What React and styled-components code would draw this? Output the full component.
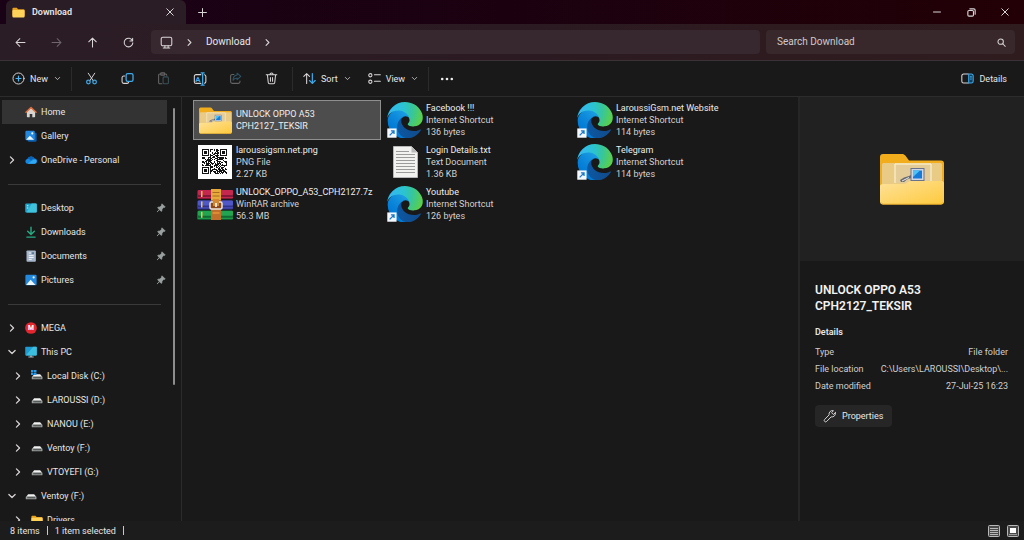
import React, { useState } from "react";
import styled, { createGlobalStyle } from "styled-components";

const GlobalStyle = createGlobalStyle`
    * {
        box-sizing: border-box;
    }
    body {
        margin: 0;
        background: #191919;
        color: #e6e6e6;
        font-family: Roboto, "Open Sans", sans-serif;
        font-size: 9px;
        line-height: 12px;
    }
    button, input {
        margin: 0;
        padding: 0;
        border: none;
        background: none;
        color: inherit;
        font: inherit;
    }
    button {
        cursor: pointer;
    }
    a {
        color: inherit;
        text-decoration: none;
    }
    svg {
        display: block;
        flex: none;
    }
`;

const Window = styled.div`
    height: 100vh;
    display: flex;
    flex-direction: column;
    overflow: hidden;
`;

const TitleBar = styled.header`
    height: 24px;
    flex: none;
    display: flex;
    align-items: center;
    padding-left: 6px;
    background: linear-gradient(90deg, #1a0216, #1b0110 50%, #220005);
`;

const Tab = styled.div`
    width: 180px;
    height: 24px;
    display: flex;
    align-items: center;
    padding: 0 10px 0 6px;
    gap: 7px;
    border-radius: 6px 6px 0 0;
    background: #2b1d26;
    font-weight: 600;
    span {
        flex: 1;
    }
`;

const IconButton = styled.button`
    width: ${(props) => props.$width || 36}px;
    height: 24px;
    flex: none;
    display: flex;
    align-items: center;
    justify-content: center;
    opacity: ${(props) => (props.disabled ? 0.4 : 1)};
`;

const WindowButtons = styled.div`
    margin-left: auto;
    display: flex;
    padding-right: 2px;
`;

const NavBar = styled.div`
    height: 36px;
    flex: none;
    display: flex;
    align-items: center;
    padding: 0 9px 0 2px;
    background: linear-gradient(90deg, #2b1d26, #2b1a21 50%, #2f1c1f);
    font-size: 10px;
`;

const AddressBar = styled.nav`
    flex: 1;
    height: 24px;
    margin: 0 6px 0 5px;
    padding: 0 9px;
    display: flex;
    align-items: center;
    gap: 12px;
    border-radius: 4px;
    background: #37282f;
`;

const SearchBox = styled.label`
    width: 249px;
    height: 24px;
    display: flex;
    align-items: center;
    padding: 0 9px 0 11px;
    border-radius: 4px;
    background: #38282b;
    input {
        flex: 1;
        min-width: 0;
        outline: none;
    }
    input::placeholder {
        color: #d0c8ca;
        opacity: 1;
    }
`;

const Toolbar = styled.div`
    height: 37px;
    flex: none;
    display: flex;
    align-items: center;
    padding: 0 9px 0 4px;
    border-top: 1px solid #3a3236;
    border-bottom: 1px solid #2c2c2c;
    background: #191919;
`;

const ToolButton = styled.button`
    height: 24px;
    display: flex;
    align-items: center;
    gap: 5px;
    padding: 0 8px;
    svg + span + svg {
        margin-left: 1px;
    }
`;

const Divider = styled.div`
    width: 1px;
    height: 24px;
    margin: 0 2px;
    background: #2b2b2b;
`;

const Spacer = styled.div`
    flex: 1;
`;

const Body = styled.div`
    flex: 1;
    min-height: 0;
    display: flex;
`;

const Sidebar = styled.aside`
    width: 182px;
    flex: none;
    display: flex;
    justify-content: space-between;
    border-right: 1px solid #2b2b2b;
    overflow: hidden;
`;

const Tree = styled.ul`
    width: 167px;
    margin: 0;
    padding: 3px 0 0 2px;
    list-style: none;
`;

const TreeRow = styled.li`
    height: 24px;
    display: flex;
    align-items: center;
    padding: 0 1px 0 ${(props) => (props.$nested ? 10 : 4)}px;
    background: ${(props) => (props.$active ? "#333333" : "transparent")};
    a {
        flex: 1;
        display: flex;
        align-items: center;
        gap: 4px;
        white-space: nowrap;
    }
`;

const Expander = styled.button`
    width: 12px;
    height: 12px;
    margin-right: 7px;
    display: flex;
    align-items: center;
    justify-content: center;
`;

const TreeLine = styled.li`
    height: 1px;
    margin: 12px 6px 11px;
    background: #3a3a3a;
`;

const ScrollRail = styled.div`
    width: 8px;
    padding-top: 11px;
    div {
        width: 2px;
        height: 67%;
        border-radius: 1px;
        background: #8d8d8d;
    }
`;

const Files = styled.main`
    flex: 1;
    min-width: 0;
    padding: 3px 0 0 11px;
    display: grid;
    grid-template-columns: repeat(auto-fill, 188px);
    grid-auto-rows: 40px;
    align-content: start;
    gap: 2px;
`;

const FileItem = styled.button`
    display: flex;
    align-items: center;
    gap: 3px;
    padding-left: 3px;
    border: 1px solid ${(props) => (props.$selected ? "#8f8f8f" : "transparent")};
    background: ${(props) => (props.$selected ? "#4d4d4d" : "transparent")};
    text-align: left;
`;

const FileIcon = styled.span`
    width: 36px;
    flex: none;
    display: flex;
    justify-content: center;
`;

const FileText = styled.span`
    display: flex;
    flex-direction: column;
    white-space: nowrap;
    color: #d2d2d2;
    span:first-child {
        color: #ededed;
        white-space: pre-line;
    }
`;

const Details = styled.aside`
    width: 226px;
    flex: none;
    border-left: 2px solid #262626;
`;

const Preview = styled.div`
    height: 164px;
    display: flex;
    align-items: center;
    justify-content: center;
    background: #212121;
`;

const DetailsBody = styled.div`
    padding: 21px 16px 0 15px;
    h2 {
        margin: 0;
        font-size: 12px;
        line-height: 16px;
        font-weight: 600;
        color: #f2f2f2;
    }
    h3 {
        margin: 12px 0 6px;
        font-size: 9px;
        line-height: 12px;
        font-weight: 600;
    }
`;

const Properties = styled.dl`
    margin: 0 0 10px;
    color: #cfcfcf;
    div {
        display: flex;
        justify-content: space-between;
        line-height: 17px;
    }
    dd {
        margin: 0;
    }
`;

const PropertiesButton = styled.button`
    height: 22px;
    display: flex;
    align-items: center;
    gap: 5px;
    padding: 0 9px 0 8px;
    border-radius: 4px;
    background: #262626;
`;

const StatusBar = styled.footer`
    height: 19px;
    flex: none;
    display: flex;
    align-items: center;
    gap: 7px;
    padding: 0 5px 0 10px;
    background: #1c1c1c;
    i {
        width: 1px;
        height: 9px;
        background: #c8c8c8;
    }
`;

/* ---------- icons ---------- */

const Line = ({ size = 12, box = 16, children, color = "#d9d5d7", width = 1.3, ...rest }) => (
    <svg width={size} height={size} viewBox={`0 0 ${box} ${box}`} fill="none" stroke={color}
        strokeWidth={width} strokeLinecap="round" strokeLinejoin="round" aria-hidden="true" {...rest}>
        {children}
    </svg>
);

const Chevron = ({ down, size = 10, width = 2 }) => (
    <Line size={size} width={width}>
        <path d={down ? "M3 5.5 8 10.5 13 5.5" : "M5.5 3 10.5 8 5.5 13"} />
    </Line>
);

const SmallChevron = () => <Chevron down size={7} width={1.8} />;

const CloseIcon = () => <Line size={8}><path d="M1.5 1.5l13 13M14.5 1.5l-13 13" strokeWidth="2" /></Line>;
const PlusIcon = () => <Line size={9}><path d="M8 1v14M1 8h14" strokeWidth="1.8" /></Line>;
const MinimizeIcon = () => <Line size={8}><path d="M1 8h14" strokeWidth="2" /></Line>;
const RestoreIcon = () => (
    <Line size={9} width={2}>
        <rect x="1.5" y="4.5" width="10" height="10" rx="2" />
        <path d="M5 1.5h7a2.5 2.5 0 0 1 2.5 2.5v7" />
    </Line>
);
const BackIcon = () => <Line size={11}><path d="M14.5 8h-13M7 2.5 1.5 8 7 13.5" strokeWidth="1.5" /></Line>;
const ForwardIcon = () => <Line size={11}><path d="M1.5 8h13M9 2.5 14.5 8 9 13.5" strokeWidth="1.5" /></Line>;
const UpIcon = () => <Line size={11}><path d="M8 14.5v-13M2.5 7 8 1.5 13.5 7" strokeWidth="1.5" /></Line>;
const RefreshIcon = () => (
    <Line size={11}><path d="M13.8 5.5A6.3 6.3 0 1 0 14.3 8.5M14 1.8v4h-4" strokeWidth="1.5" /></Line>
);
const MonitorIcon = () => (
    <Line size={13}>
        <rect x="1.5" y="1.5" width="13" height="10.5" rx="2" />
        <path d="M6 12v2.5M10 12v2.5M4 14.7h8" />
    </Line>
);
const SearchIcon = () => (
    <Line size={9} width={1.8}><circle cx="6.5" cy="6.5" r="4.8" /><path d="M10.2 10.2 14.7 14.7" /></Line>
);

const NewIcon = () => (
    <Line size={13} width={1.2}>
        <circle cx="8" cy="8" r="6.8" />
        <path d="M8 5v6M5 8h6" stroke="#4cb4f0" strokeWidth="1.5" />
    </Line>
);
const CutIcon = () => (
    <Line size={13} width={1.2}>
        <path d="M4 1.5 10.3 11M12 1.5 5.7 11" />
        <circle cx="4.2" cy="12.3" r="2.2" stroke="#3fa9ea" strokeWidth="1.5" />
        <circle cx="11.8" cy="12.3" r="2.2" stroke="#3fa9ea" strokeWidth="1.5" />
    </Line>
);
const CopyIcon = () => (
    <Line size={13}>
        <path d="M4.5 5H3.3a2 2 0 0 0-2 2v5a2 2 0 0 0 2 2h4.2a2 2 0 0 0 2-1.5" />
        <rect x="6.3" y="2" width="8.5" height="9.5" rx="2" stroke="#3fa9ea" strokeWidth="1.6" />
    </Line>
);
const PasteIcon = () => (
    <Line size={13}>
        <path d="M6 14.5H3.5a1.5 1.5 0 0 1-1.5-1.5V4a1.5 1.5 0 0 1 1.5-1.5h7A1.5 1.5 0 0 1 12 4" />
        <rect x="4.5" y="1" width="5" height="3" rx="1" />
        <rect x="7.5" y="6" width="6.5" height="8.5" rx="1.3" stroke="#6fa5b8" />
    </Line>
);
const RenameIcon = () => (
    <Line size={14} width={1.2}>
        <path d="M9 3H3.5a2 2 0 0 0-2 2v6a2 2 0 0 0 2 2H9M13 3.2A2 2 0 0 1 14.7 5v6a2 2 0 0 1-1.7 1.9" />
        <path d="M9.3 1h3.4M11 1v14M9.3 15h3.4" stroke="#3fa9ea" strokeWidth="1.5" />
        <text x="2.7" y="11" fill="#3fa9ea" stroke="none" fontSize="9" fontWeight="700">A</text>
    </Line>
);
const ShareIcon = () => (
    <Line size={13}>
        <path d="M6 3H4a2 2 0 0 0-2 2v7a2 2 0 0 0 2 2h7.500a2 2 0 0 0 2-2v-1" />
        <path d="M10 1.5 14.5 5.5 10 9.5V7.3C7.5 7.3 6 8.3 5 10.3 5 6.5 7 4 10 3.7Z" stroke="#4fa9dc" />
    </Line>
);
const DeleteIcon = () => (
    <Line size={13}>
        <path d="M1.5 3.5h13M6 3.3a2 2 0 0 1 4 0M3 3.7l1 9.3a1.6 1.6 0 0 0 1.6 1.5h4.8A1.6 1.6 0 0 0 12 13l1-9.3M6.7 6.7v4.6M9.3 6.7v4.6" />
    </Line>
);
const SortIcon = () => (
    <Line size={13}>
        <path d="M4.5 14V2M1 5.5 4.5 2 8 5.5" />
        <path d="M11.5 2v12M8 10.5 11.5 14 15 10.5" stroke="#3fa9ea" strokeWidth="1.5" />
    </Line>
);
const ViewIcon = () => (
    <svg width="14" height="13" viewBox="0 0 17 16" fill="none" stroke="#d9d5d7" strokeWidth="1.3" strokeLinecap="round" aria-hidden="true">
        <circle cx="4" cy="4" r="2" />
        <circle cx="4" cy="12" r="2" />
        <path d="M9 3.5h7.300M9 11.5h7.300" />
    </svg>
);
const MoreIcon = () => (
    <svg width="14" height="4" viewBox="0 0 14 4" fill="#eee" aria-hidden="true">
        <circle cx="2.2" cy="2" r="1.3" /><circle cx="7" cy="2" r="1.3" /><circle cx="11.8" cy="2" r="1.3" />
    </svg>
);
const DetailsIcon = () => (
    <Line size={13}>
        <path d="M9 2.5H3.2A2.2 2.2 0 0 0 1 4.7v6.6a2.2 2.2 0 0 0 2.2 2.2H9" />
        <path d="M9.5 2.5h3.3A2.2 2.2 0 0 1 15 4.7v6.6a2.2 2.2 0 0 1-2.2 2.2H9.5z" stroke="#3fa9ea" fill="#123f5c" />
        <path d="M11.5 6h1.3M11.5 8.5h1.3" stroke="#3fa9ea" />
    </Line>
);
const WrenchIcon = () => (
    <Line size={14} width={1.1}>
        <path d="M14.2 4.2 11.8 6.3 9.8 4.3 11.9 1.9A4 4 0 0 0 7 6.7L1.9 11.9a1.6 1.6 0 0 0 2.3 2.3L9.3 9A4 4 0 0 0 14.2 4.2Z" />
    </Line>
);

const PinIcon = () => (
    <svg width="10" height="10" viewBox="0 0 16 16" aria-hidden="true">
        <path d="M9.6 1.2 14.8 6.4 13.4 7.2 11.9 7.3 9.7 9.8 9.3 12.8 8.2 13.4 5.5 10.7 1.6 14.5 5.3 10.4 2.6 7.8 3.2 6.7 6.2 6.3 8.7 4.1 8.8 2.6Z"
            fill="#9aa0a0" stroke="#9aa0a0" strokeWidth="1" strokeLinejoin="round" />
    </svg>
);

const FolderIcon = ({ size = 13 }) => (
    <svg width={size} height={size} viewBox="0 0 16 16" aria-hidden="true">
        <path d="M.5 3.5a1.3 1.3 0 0 1 1.3-1.3h4L7.6 4H14.2a1.3 1.3 0 0 1 1.3 1.3V12H.5Z" fill="#e9a21c" />
        <rect x=".5" y="5" width="15" height="9" rx="1.2" fill="#ffd25a" />
    </svg>
);

const HomeIcon = () => (
    <svg width="12" height="12" viewBox="0 0 16 16" aria-hidden="true">
        <path d="M2.5 7 8 2.5 13.5 7v7a1 1 0 0 1-1 1H9.7v-4.5H6.3V15H3.5a1 1 0 0 1-1-1Z" fill="#d6d3d1" />
        <path d="M1.3 8.3 8 2l6.7 6.3" fill="none" stroke="#e06d36" strokeWidth="2" strokeLinecap="round" strokeLinejoin="round" />
    </svg>
);
const PictureIcon = ({ stacked }) => (
    <svg width="12" height="12" viewBox="0 0 16 16" aria-hidden="true">
        {stacked && <rect x="3.5" y="3.5" width="12" height="12" rx="1.5" fill="#0b5cab" />}
        <rect x=".5" y="1" width={stacked ? 12.5 : 15} height={stacked ? 12.5 : 14} rx="1.5" fill="#2489dc" />
        <path d={stacked ? "M1.5 13 6.5 7.5 12 13Z" : "M1.5 14.5 7.5 7.5 14 14.5Z"} fill="#f0f8ff" />
        <circle cx={stacked ? 9.7 : 11.5} cy="4.5" r="1.4" fill="#e8f5ff" />
    </svg>
);
const CloudIcon = () => (
    <svg width="12" height="12" viewBox="0 0 16 16" aria-hidden="true">
        <path d="M3.5 13a3.3 3.3 0 0 1-.4-6.5A5.3 5.3 0 0 1 12.7 6 3.5 3.5 0 0 1 12.5 13Z" fill="#1488e0" />
        <path d="M3.1 6.5A5.3 5.3 0 0 1 12.7 6C10.5 6 9 7.5 8 9 7 7.5 5 6.3 3.1 6.5Z" fill="#0a62b8" />
        <path d="M3.5 13 9.5 8.6C11 7.7 13 7.5 14.6 8A3.5 3.5 0 0 1 12.5 13Z" fill="#31a9f2" />
    </svg>
);
const DesktopIcon = () => (
    <svg width="12" height="12" viewBox="0 0 16 16" aria-hidden="true">
        <rect x=".3" y="2" width="15.4" height="12" rx="1.3" fill="#22a3cc" />
        <path d="M9 2h5.4A1.3 1.3 0 0 1 15.7 3.3v9.4A1.3 1.3 0 0 1 14.4 14H2Z" fill="#3fc3dc" />
        <path d="M2.5 5h2M2.5 8h2" stroke="#c9f4ff" strokeWidth="1.4" />
    </svg>
);
const DownloadIcon = () => (
    <Line size={12} color="#25ab82" width={1.9}><path d="M8 1.5v9.500M3.5 7 8 11.3 12.5 7M2.5 14.8h11" /></Line>
);
const DocumentIcon = () => (
    <svg width="12" height="12" viewBox="0 0 16 16" aria-hidden="true">
        <rect x="2" y=".5" width="12.5" height="15" rx="1.3" fill="#a6b7cb" />
        <path d="M5 4h3M5 7.5h6.5M5 10h6.5M5 12.5h4" stroke="#f1f6fb" strokeWidth="1.3" />
        <rect x="9" y="3" width="3" height="2.5" fill="#5f7896" />
    </svg>
);
const MegaIcon = () => (
    <svg width="12" height="12" viewBox="0 0 16 16" aria-hidden="true">
        <circle cx="8" cy="8" r="7.8" fill="#e3262f" />
        <text x="8" y="11.3" textAnchor="middle" fontSize="9" fontWeight="800" fill="#fff">M</text>
    </svg>
);
const ComputerIcon = () => (
    <svg width="12" height="12" viewBox="0 0 16 16" aria-hidden="true">
        <rect x=".3" y="1" width="15.4" height="11.5" rx="1" fill="#1e9bd0" />
        <path d="M15 1H11L1 12.5h13.7a1 1 0 0 0 1-1V2Z" fill="#3cbfdf" />
        <path d="M7 12.5h2V14h2.5v1.2h-7V14H7Z" fill="#a9b8c2" />
    </svg>
);
const DriveIcon = ({ system }) => (
    <svg width="12" height="12" viewBox="0 0 16 16" aria-hidden="true">
        <path d="M4.2 5.5h8L15 9H1.5Z" fill="#f1f1f1" />
        <rect x="1" y="8.5" width="14.3" height="3.8" rx=".8" fill="#9a9f9d" />
        <rect x="3" y="9.7" width="10.5" height="1.3" fill="#3c4240" />
        {system && <path d="M0 0h3.3v3H0ZM4 0h3.3v3H4ZM0 3.7h3.3v3H0ZM4 3.7h3.3v3H4Z" fill="#2b9ae8" />}
    </svg>
);

const BigFolder = ({ width }) => (
    <svg width={width} height={Math.round((width * 52) / 64)} viewBox="0 0 64 52" aria-hidden="true">
        <defs>
            <linearGradient id="folderFront" x1="0" y1="0" x2="1" y2="1">
                <stop offset="0" stopColor="#ffe29a" />
                <stop offset="1" stopColor="#fdc93c" />
            </linearGradient>
        </defs>
        <path d="M0 4a3 3 0 0 1 3-3h19c1.5 0 2.5.6 3.3 1.6L29 7.5h32a3 3 0 0 1 3 3V46H0Z" fill="#f2ad1d" />
        <rect x="2" y="10" width="60" height="26" rx="1.5" fill="#eacb85" />
        <path d="M15 30V11h36v19" fill="#e4cc98" stroke="#fff6da" strokeWidth="1" />
        <rect x="31" y="15.5" width="13" height="12" fill="#cfd6e6" stroke="#69728c" strokeWidth="1" />
        <rect x="33" y="17.5" width="9" height="8" fill="#167bd8" />
        <path d="M33 24V17.5h7Z" fill="#4cc2f5" />
        <path d="M20 27 24 24.5l5-1.5 2-1v3l-4 1.5-3 2.5h-3Z" fill="#686b70" />
        <path d="M22 28 29 24.5" stroke="#e7ebf0" strokeWidth="1" />
        <path d="M0 33.5a2.5 2.5 0 0 1 2.5-2.5H24c3 0 4-3 7-3h30.5a2.5 2.5 0 0 1 2.5 2.5V48.5a3 3 0 0 1-3 3H3a3 3 0 0 1-3-3Z" fill="url(#folderFront)" />
        <path d="M1 49.5a3 3 0 0 0 2 1.7h58a3 3 0 0 0 2-1.7" fill="none" stroke="#e9a71f" strokeWidth=".8" />
    </svg>
);

const qrSize = 25;
const finder = (x, y) => {
    const d = Math.max(Math.abs(x - 3), Math.abs(y - 3));
    return d === 3 || d <= 1;
};
const qrDark = (x, y) => {
    const far = qrSize - 8;
    if (x < 8 && y < 8) return x < 7 && y < 7 && finder(x, y);
    if (x >= far && y < 8) return x > far && y < 7 && finder(x - far - 1, y);
    if (x < 8 && y >= far) return x < 7 && y > far && finder(x, y - far - 1);
    return ((x * 37 + y * 61 + x * y * 17 + ((x * x) ^ (y * 13))) % 11) > 4;
};
const QrIcon = () => (
    <svg width="34" height="34" viewBox="0 0 34 34" shapeRendering="crispEdges" aria-hidden="true">
        <rect width="34" height="34" fill="#fff" />
        {Array.from({ length: qrSize * qrSize }, (_, i) => [i % qrSize, Math.floor(i / qrSize)])
            .filter(([x, y]) => qrDark(x, y))
            .map(([x, y]) => <rect key={`${x}-${y}`} x={x + 4} y={y + 4} width="1" height="1" fill="#111" />)}
    </svg>
);

const RarIcon = () => (
    <svg width="36" height="31" viewBox="0 0 36 31" aria-hidden="true">
        {[["#c4284e", "#84173a"], ["#5058c8", "#30348c"], ["#23a450", "#0f6c35"]].map(([light, dark], i) => (
            <g key={light} transform={`translate(0 ${i * 10.4 + 1})`}>
                <rect width="36" height="9" rx="1.5" fill={dark} />
                <rect x="1" width="35" height="5" rx="1" fill={light} />
                <rect x="1" y="7" width="35" height="1" fill={light} />
                <rect x="4" y="1" width="1.5" height="6" fill="#eac548" />
            </g>
        ))}
        <rect x="14" width="10" height="31" fill="#c0702a" />
        <rect x="14" width="10" height="11" fill="#e5a93c" />
        <path d="M15.5 3.5h7M15.5 7h7" stroke="#a96b1f" strokeWidth="1" />
        <rect x="13" y="13" width="12" height="7" rx="1.5" fill="#8a4a1c" stroke="#ece6da" strokeWidth="1.5" />
        <path d="M16 10h6v7h-6Z" fill="#d08a36" />
        <path d="M19 14v4" stroke="#fff" strokeWidth="1.5" />
        <path d="M15.5 24h7" stroke="#dc8d35" strokeWidth="2" />
    </svg>
);

const TextFileIcon = () => (
    <svg width="25" height="32" viewBox="0 0 25 32" aria-hidden="true">
        <path d="M.5.5h18l6 6v25H.5Z" fill="#f2f2f0" stroke="#c4c4c4" strokeWidth=".8" />
        <path d="M18.5.5v6h6Z" fill="#b9b9b9" />
        <path d="M3 5.5h13M3 8.5h19M3 11.5h19M3 14.5h19M3 17.5h19M3 20.5h19M3 23.5h19M3 26.5h19" stroke="#9b9b9b" strokeWidth="1" />
    </svg>
);

const EdgeIcon = () => (
    <svg width="36" height="36" viewBox="0 0 256 256" aria-hidden="true">
        <defs>
            <linearGradient id="edgeDark" x1="63" y1="178" x2="241" y2="178" gradientUnits="userSpaceOnUse">
                <stop offset="0" stopColor="#0c59a4" />
                <stop offset="1" stopColor="#114a8b" />
            </linearGradient>
            <linearGradient id="edgeBlue" x1="150" y1="95" x2="45" y2="215" gradientUnits="userSpaceOnUse">
                <stop offset="0" stopColor="#1b9de2" />
                <stop offset=".5" stopColor="#0c87da" />
                <stop offset="1" stopColor="#0078d4" />
            </linearGradient>
            <radialGradient id="edgeGreen" cx="28" cy="52" r="230" gradientUnits="userSpaceOnUse">
                <stop offset="0" stopColor="#35b9f1" />
                <stop offset=".4" stopColor="#2bc3d2" />
                <stop offset=".65" stopColor="#35c5a0" />
                <stop offset="1" stopColor="#5cd048" />
            </radialGradient>
        </defs>
        <path fill="url(#edgeDark)" d="M235.7 195.5a93.7 93.7 0 0 1-10.6 4.7 101.9 101.9 0 0 1-35.9 6.4c-47.3 0-88.5-32.5-88.5-74.3a31.5 31.5 0 0 1 16.4-27.3c-42.8 1.8-53.8 46.4-53.8 72.5 0 74 68.1 81.4 82.8 81.4 7.9 0 19.8-2.3 27-4.6l1.3-.4a128.3 128.3 0 0 0 66.6-52.8 4 4 0 0 0-5.3-5.6Z" />
        <path fill="url(#edgeBlue)" d="M110.3 246.3A79.2 79.2 0 0 1 87.6 225a80.7 80.7 0 0 1 29.5-120c3.2-1.5 8.5-4.1 15.6-4a32.4 32.4 0 0 1 25.7 13 31.9 31.9 0 0 1 6.3 18.7c0-.2 24.5-79.6-80-79.6-43.9 0-80 41.6-80 78.2a130.2 130.2 0 0 0 12.1 56 128 128 0 0 0 156.4 67 75.5 75.5 0 0 1-62.8-8Z" />
        <path fill="url(#edgeGreen)" d="M150.9 151.8c-.8 1-3.4 2.5-3.4 5.6 0 2.6 1.7 5.2 4.8 7.3 14.3 10 41.4 8.6 41.5 8.6a59.6 59.6 0 0 0 30.3-8.3 61.4 61.4 0 0 0 30.4-52.9c.3-22.4-8-37.3-11.3-43.9C222.2 24.5 176.5.1 128 .1A128 128 0 0 0 0 126.3c.5-36.5 36.8-66 80-66 3.5 0 23.5.3 42 10a72.6 72.6 0 0 1 30.9 29.3c6.1 10.6 7.2 24.1 7.2 29.5s-2.7 13.3-9.2 22.7Z" />
        <rect x="2" y="188" width="66" height="66" fill="#f4f8fc" />
        <path d="M19 237 48 208M28 206h22v22" fill="none" stroke="#1a78cc" strokeWidth="9" />
    </svg>
);

const ListViewIcon = () => (
    <svg width="12" height="12" viewBox="0 0 12 12" aria-hidden="true">
        <rect x=".5" y=".5" width="11" height="11" rx="1" fill="#4a4a4a" stroke="#b9b9b9" />
        <path d="M2 3.5h8M2 5.5h8M2 7.5h8M2 9.5h8" stroke="#b9b9b9" strokeWidth="1" />
    </svg>
);
const ThumbViewIcon = () => (
    <svg width="12" height="12" viewBox="0 0 12 12" aria-hidden="true">
        <rect x=".5" y=".5" width="11" height="11" rx="1" fill="#4a4a4a" stroke="#b9b9b9" />
        <rect x="3" y="3" width="6" height="5" fill="#fff" />
        <path d="M2 9.5h8" stroke="#9a9a9a" strokeWidth="1" />
    </svg>
);

/* ---------- data ---------- */

const places = [
    { name: "Home", icon: <HomeIcon /> },
    { name: "Gallery", icon: <PictureIcon stacked /> },
    { name: "OneDrive - Personal", icon: <CloudIcon />, expand: "closed" },
    null,
    { name: "Desktop", icon: <DesktopIcon />, pinned: true },
    { name: "Downloads", icon: <DownloadIcon />, pinned: true },
    { name: "Documents", icon: <DocumentIcon />, pinned: true },
    { name: "Pictures", icon: <PictureIcon />, pinned: true },
    null,
    { name: "MEGA", icon: <MegaIcon />, expand: "closed" },
    { name: "This PC", icon: <ComputerIcon />, expand: "open" },
    { name: "Local Disk (C:)", icon: <DriveIcon system />, expand: "closed", nested: true },
    { name: "LAROUSSI (D:)", icon: <DriveIcon />, expand: "closed", nested: true },
    { name: "NANOU (E:)", icon: <DriveIcon />, expand: "closed", nested: true },
    { name: "Ventoy (F:)", icon: <DriveIcon />, expand: "closed", nested: true },
    { name: "VTOYEFI (G:)", icon: <DriveIcon />, expand: "closed", nested: true },
    { name: "Ventoy (F:)", icon: <DriveIcon />, expand: "open" },
    { name: "Drivers", icon: <FolderIcon size={12} />, expand: "closed", nested: true },
];

const files = [
    { name: "UNLOCK OPPO A53\nCPH2127_TEKSIR", icon: <BigFolder width={33} /> },
    { name: "Facebook !!!", type: "Internet Shortcut", size: "136 bytes", icon: <EdgeIcon /> },
    { name: "LaroussiGsm.net Website", type: "Internet Shortcut", size: "114 bytes", icon: <EdgeIcon /> },
    { name: "laroussigsm.net.png", type: "PNG File", size: "2.27 KB", icon: <QrIcon /> },
    { name: "Login Details.txt", type: "Text Document", size: "1.36 KB", icon: <TextFileIcon /> },
    { name: "Telegram", type: "Internet Shortcut", size: "114 bytes", icon: <EdgeIcon /> },
    { name: "UNLOCK_OPPO_A53_CPH2127.7z", type: "WinRAR archive", size: "56.3 MB", icon: <RarIcon /> },
    { name: "Youtube", type: "Internet Shortcut", size: "126 bytes", icon: <EdgeIcon /> },
];

const TreeItem = ({ item, active }) => {
    const { name, icon, expand, nested, pinned } = item;
    return (
        <TreeRow $nested={nested} $active={active}>
            <Expander aria-label={`Expand ${name}`} disabled={!expand}>
                {expand && <Chevron down={expand === "open"} />}
            </Expander>
            <a href="#">{icon}<span>{name}</span></a>
            {pinned && <PinIcon />}
        </TreeRow>
    );
};

const App = () => {
    const [selected, setSelected] = useState(0);
    const [search, setSearch] = useState("");

    return (
        <Window>
            <GlobalStyle />
            <TitleBar>
                <Tab>
                    <FolderIcon />
                    <span>Download</span>
                    <IconButton $width={12} aria-label="Close tab"><CloseIcon /></IconButton>
                </Tab>
                <IconButton $width={32} aria-label="New tab"><PlusIcon /></IconButton>
                <WindowButtons>
                    <IconButton $width={34} aria-label="Minimize"><MinimizeIcon /></IconButton>
                    <IconButton $width={34} aria-label="Restore"><RestoreIcon /></IconButton>
                    <IconButton $width={34} aria-label="Close"><CloseIcon /></IconButton>
                </WindowButtons>
            </TitleBar>
            <NavBar>
                <IconButton aria-label="Back"><BackIcon /></IconButton>
                <IconButton aria-label="Forward" disabled><ForwardIcon /></IconButton>
                <IconButton aria-label="Up"><UpIcon /></IconButton>
                <IconButton aria-label="Refresh"><RefreshIcon /></IconButton>
                <AddressBar>
                    <MonitorIcon />
                    <Chevron size={9} />
                    <a href="#">Download</a>
                    <Chevron size={9} />
                </AddressBar>
                <SearchBox>
                    <input type="text" placeholder="Search Download" aria-label="Search Download"
                        value={search} onChange={(e) => setSearch(e.target.value)} />
                    <SearchIcon />
                </SearchBox>
            </NavBar>
            <Toolbar>
                <ToolButton><NewIcon /><span>New</span><SmallChevron /></ToolButton>
                <Divider />
                <IconButton aria-label="Cut"><CutIcon /></IconButton>
                <IconButton aria-label="Copy"><CopyIcon /></IconButton>
                <IconButton aria-label="Paste" disabled><PasteIcon /></IconButton>
                <IconButton aria-label="Rename"><RenameIcon /></IconButton>
                <IconButton aria-label="Share" disabled><ShareIcon /></IconButton>
                <IconButton aria-label="Delete"><DeleteIcon /></IconButton>
                <Divider />
                <ToolButton><SortIcon /><span>Sort</span><SmallChevron /></ToolButton>
                <ToolButton><ViewIcon /><span>View</span><SmallChevron /></ToolButton>
                <Divider />
                <IconButton $width={32} aria-label="See more"><MoreIcon /></IconButton>
                <Spacer />
                <ToolButton><DetailsIcon /><span>Details</span></ToolButton>
            </Toolbar>
            <Body>
                <Sidebar>
                    <Tree>
                        {places.map((item, i) =>
                            item ? <TreeItem key={i} item={item} active={i === 0} /> : <TreeLine key={i} />
                        )}
                    </Tree>
                    <ScrollRail><div /></ScrollRail>
                </Sidebar>
                <Files>
                    {files.map((file, i) => (
                        <FileItem key={file.name} $selected={i === selected} onClick={() => setSelected(i)}>
                            <FileIcon>{file.icon}</FileIcon>
                            <FileText>
                                <span>{file.name}</span>
                                {file.type && <span>{file.type}</span>}
                                {file.size && <span>{file.size}</span>}
                            </FileText>
                        </FileItem>
                    ))}
                </Files>
                <Details>
                    <Preview><BigFolder width={64} /></Preview>
                    <DetailsBody>
                        <h2>UNLOCK OPPO A53<br />CPH2127_TEKSIR</h2>
                        <h3>Details</h3>
                        <Properties>
                            <div><dt>Type</dt><dd>File folder</dd></div>
                            <div><dt>File location</dt><dd>C:\Users\LAROUSSI\Desktop\...</dd></div>
                            <div><dt>Date modified</dt><dd>27-Jul-25 16:23</dd></div>
                        </Properties>
                        <PropertiesButton><WrenchIcon />Properties</PropertiesButton>
                    </DetailsBody>
                </Details>
            </Body>
            <StatusBar>
                <span>8 items</span>
                <i />
                <span>1 item selected</span>
                <i />
                <Spacer />
                <IconButton $width={12} aria-label="Details view"><ListViewIcon /></IconButton>
                <IconButton $width={12} aria-label="Thumbnail view"><ThumbViewIcon /></IconButton>
            </StatusBar>
        </Window>
    );
};

export default App;
